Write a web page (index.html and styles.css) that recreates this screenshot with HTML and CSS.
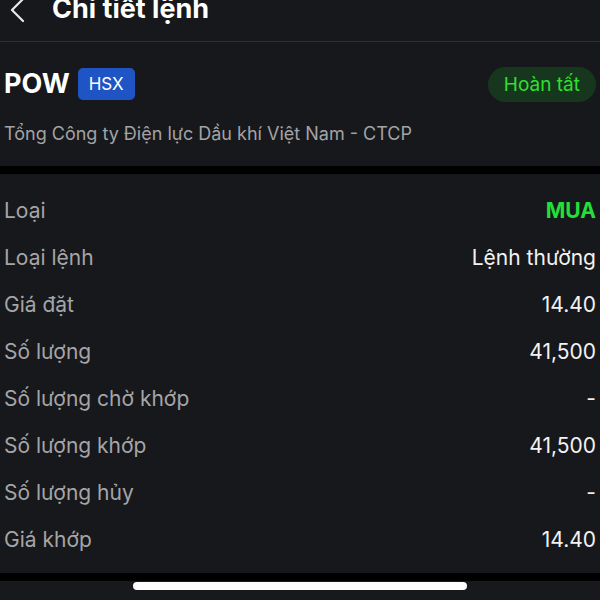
FILE: index.html
```html
<!DOCTYPE html>
<html lang="vi">
<head>
<meta charset="utf-8">
<title>Chi tiết lệnh</title>
<link rel="stylesheet" href="styles.css">
</head>
<body>
<div class="screen">
  <header class="topbar">
    <svg class="back" width="18" height="26" viewBox="0 0 18 26" aria-hidden="true">
      <path d="M15 1 L4 12 L15 23" fill="none" stroke="#e8e8e8" stroke-width="2.2" stroke-linecap="round" stroke-linejoin="round"/>
    </svg>
    <h1 class="title">Chi tiết lệnh</h1>
  </header>

  <section class="card stock">
    <div class="stock-row">
      <div class="stock-left">
        <span class="symbol">POW</span>
        <span class="exchange">HSX</span>
      </div>
      <span class="status">Hoàn tất</span>
    </div>
    <div class="company">Tổng Công ty Điện lực Dầu khí Việt Nam - CTCP</div>
  </section>

  <section class="card details">
    <div class="row"><span class="label">Loại</span><span class="value buy">MUA</span></div>
    <div class="row"><span class="label">Loại lệnh</span><span class="value">Lệnh thường</span></div>
    <div class="row"><span class="label">Giá đặt</span><span class="value">14.40</span></div>
    <div class="row"><span class="label">Số lượng</span><span class="value">41,500</span></div>
    <div class="row"><span class="label">Số lượng chờ khớp</span><span class="value">-</span></div>
    <div class="row"><span class="label">Số lượng khớp</span><span class="value">41,500</span></div>
    <div class="row"><span class="label">Số lượng hủy</span><span class="value">-</span></div>
    <div class="row"><span class="label">Giá khớp</span><span class="value">14.40</span></div>
  </section>

  <footer class="homebar">
    <span class="indicator"></span>
  </footer>
</div>
</body>
</html>
```
FILE: styles.css
```css
* { box-sizing: border-box; }
html, body {
  margin: 0;
  padding: 0;
  background: #000;
  font-family: Inter, "Noto Sans", "Liberation Sans", sans-serif;
  color: #fff;
}
.screen {
  width: 600px;
  height: 600px;
  overflow: hidden;
  display: flex;
  flex-direction: column;
  background: #000;
}
.topbar {
  height: 42px;
  flex: none;
  background: #16181b;
  border-bottom: 1px solid #2b3237;
  display: flex;
  align-items: flex-start;
  padding-left: 8px;
  overflow: hidden;
}
.back {
  margin-top: -2px;
  flex: none;
}
.title {
  margin: -7px 0 0 26px;
  font-size: 27px;
  line-height: 32px;
  font-weight: 700;
  color: #fff;
  letter-spacing: 0;
}
.card {
  background: #17181b;
  flex: none;
}
.stock {
  height: 124px;
  padding: 25px 4px 0 4px;
}
.stock-row {
  display: flex;
  align-items: center;
  justify-content: space-between;
  height: 34px;
}
.stock-left {
  display: flex;
  align-items: center;
  gap: 8px;
}
.symbol {
  font-size: 27px;
  font-weight: 700;
  line-height: 34px;
}
.exchange {
  background: #1f54c4;
  color: #fff;
  font-size: 17px;
  line-height: 32px;
  height: 32px;
  padding: 0 11px;
  border-radius: 5px;
}
.status {
  background: #17361e;
  color: #2ee02e;
  font-size: 19px;
  line-height: 35px;
  height: 35px;
  padding: 0 16px;
  border-radius: 18px;
}
.company {
  margin-top: 21px;
  font-size: 18px;
  line-height: 24px;
  color: #a3a3a5;
}
.details {
  margin-top: 8px;
  height: 399px;
  padding: 13px 4px 0 4px;
  display: flex;
  flex-direction: column;
}
.row {
  height: 47px;
  display: flex;
  align-items: center;
  justify-content: space-between;
  font-size: 21px;
}
.label { color: #a5a5a7; }
.value { color: #f2f2f2; }
.value.buy {
  color: #22e03a;
  font-weight: 700;
}
.homebar {
  margin-top: 8px;
  flex: 1;
  background: #17191c;
  display: flex;
  justify-content: center;
  padding-top: 1px;
}
.indicator {
  width: 334px;
  height: 8px;
  border-radius: 4px;
  background: #fff;
}
```
